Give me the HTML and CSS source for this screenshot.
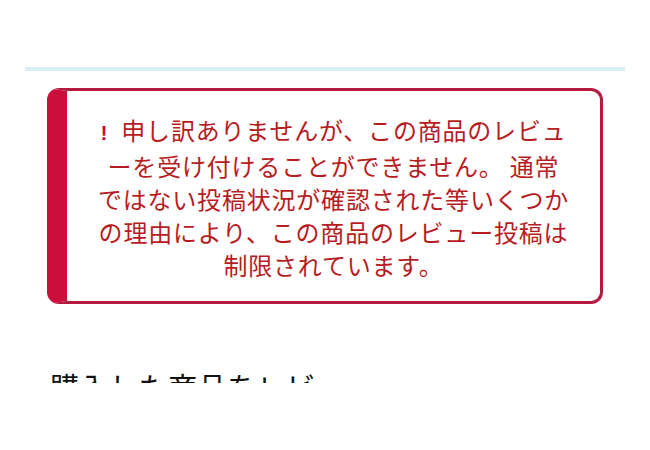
FILE: index.html
```html
<!DOCTYPE html>
<html lang="ja">
<head>
<meta charset="utf-8">
<link rel="stylesheet" href="styles.css">
</head>
<body>
<div class="page">
  <div class="rule"></div>
  <div class="alert">
    <p class="alert-text"><span class="bang">!</span>申し訳ありませんが、この商品のレビュ<br>ーを受け付けることができません。 通常<br>ではない投稿状況が確認された等いくつか<br>の理由により、この商品のレビュー投稿は<br>制限されています。</p>
  </div>
  <h2 class="heading">購入した商品をレビュー</h2>
</div>
</body>
</html>
```
FILE: styles.css
```css
html, body {
  margin: 0;
  padding: 0;
  background: #ffffff;
}
body {
  font-family: "Noto Sans CJK JP", "Noto Sans", sans-serif;
}
.page {
  height: 383px;
  overflow: hidden;
  padding-top: 67px;
  box-sizing: border-box;
}
.rule {
  margin: 0 25px;
  height: 4px;
  background: #d8eff6;
}
.alert {
  margin: 17px 47px 0 47px;
  border: 3px solid #b51a40;
  border-left: 20px solid #cc0e3c;
  border-radius: 12px;
  padding: 22px 8px 20px;
}
.alert-text {
  margin: 0;
  text-align: center;
  color: #b71c22;
  font-size: 24px;
  line-height: 33px;
  letter-spacing: 0.8px;
}
.bang {
  display: inline-block;
  font-family: "Liberation Sans", sans-serif;
  font-weight: bold;
  font-size: 21px;
  color: #c8102e;
  margin-right: 13px;
}
.heading {
  margin: 62px 0 0 50px;
  font-size: 29.5px;
  font-weight: normal;
  line-height: 40px;
  color: #111111;
  white-space: nowrap;
}
```
